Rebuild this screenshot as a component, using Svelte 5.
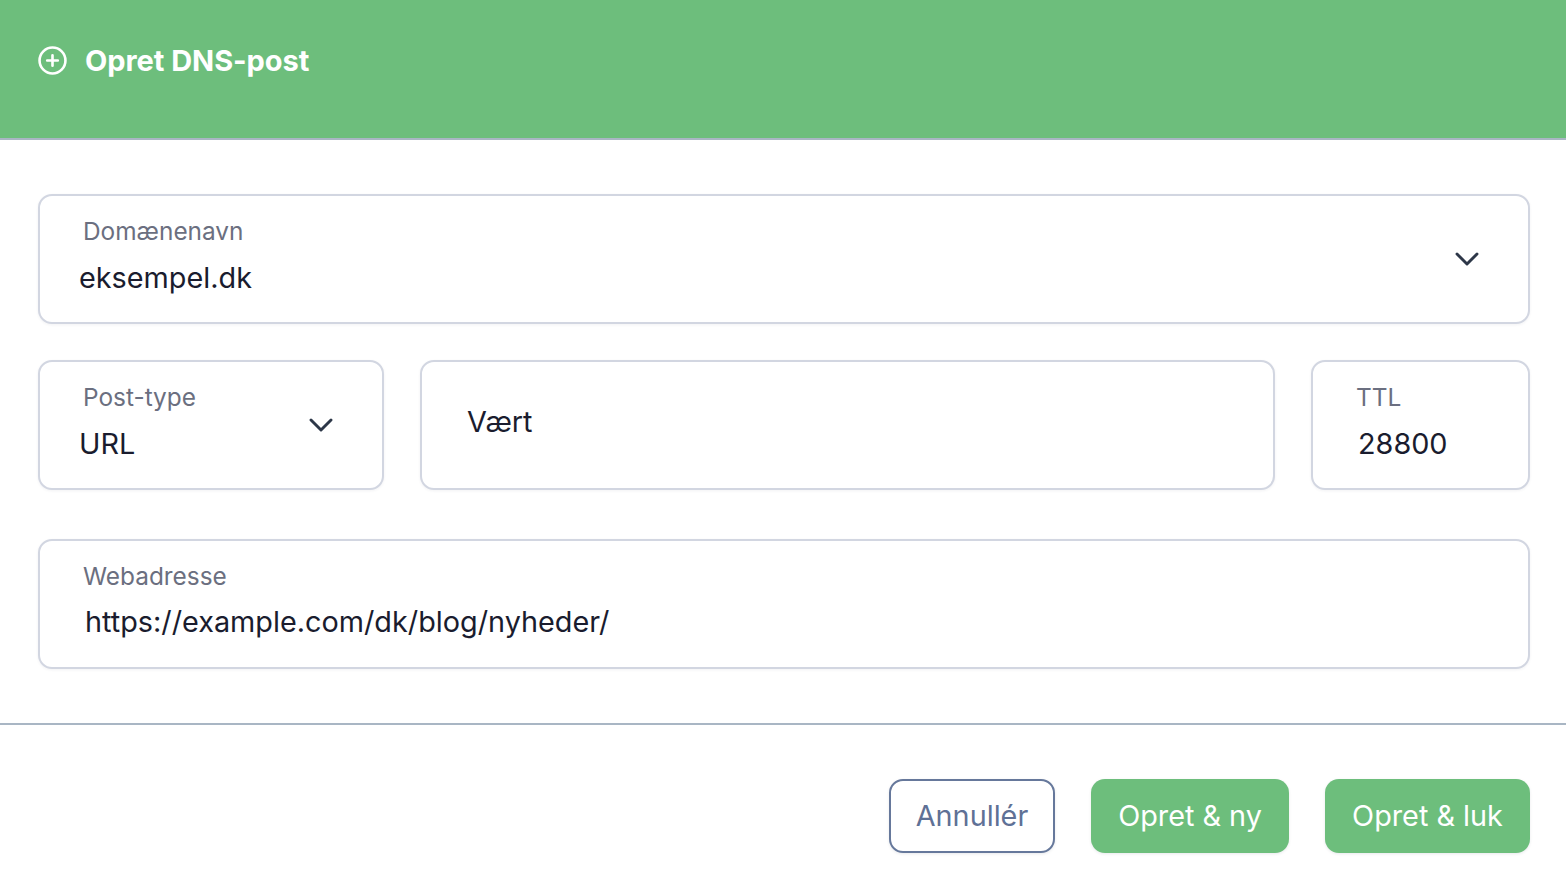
<script lang="ts">
  const title = 'Opret DNS-post';
</script>

<div class="dialog">
  <header class="head">
    <svg class="head-icon" viewBox="0 0 30 30" fill="none" stroke="#fff" stroke-width="2.7" stroke-linecap="round" aria-hidden="true">
      <circle cx="15" cy="15" r="13.4" />
      <path d="M15 9.5v11M9.5 15h11" />
    </svg>
    <h1>{title}</h1>
  </header>

  <main class="form">
    <div class="field select">
      <div class="stack">
        <span class="label">Domænenavn</span>
        <span class="value">eksempel.dk</span>
      </div>
      <svg class="chev" viewBox="0 0 24 14" fill="none" stroke="#2d3748" stroke-width="2.9" stroke-linecap="round" stroke-linejoin="round" aria-hidden="true">
        <path d="M2 2l10 10L22 2" />
      </svg>
    </div>

    <div class="row">
      <div class="field select type">
        <div class="stack">
          <span class="label">Post-type</span>
          <span class="value">URL</span>
        </div>
        <svg class="chev" viewBox="0 0 24 14" fill="none" stroke="#2d3748" stroke-width="2.9" stroke-linecap="round" stroke-linejoin="round" aria-hidden="true">
          <path d="M2 2l10 10L22 2" />
        </svg>
      </div>
      <div class="field host">
        <span class="value">Vært</span>
      </div>
      <div class="field ttl">
        <span class="label">TTL</span>
        <span class="value">28800</span>
      </div>
    </div>

    <div class="field url">
      <span class="label">Webadresse</span>
      <span class="value">https://example.com/dk/blog/nyheder/</span>
    </div>
  </main>

  <footer class="foot">
    <button class="btn ghost" type="button">Annullér</button>
    <button class="btn primary new" type="button">Opret &amp; ny</button>
    <button class="btn primary close" type="button">Opret &amp; luk</button>
  </footer>
</div>

<style>
  :global(body) { margin: 0; background: #fff; font-family: Inter, 'Liberation Sans', sans-serif; }

  .dialog { width: 1566px; height: 889px; overflow: hidden; background: #fff; }

  .head {
    height: 138px;
    box-sizing: content-box;
    background: #6dbe7c;
    border-bottom: 2px solid #a9b6c4;
    display: flex; align-items: flex-start; gap: 18px;
    padding: 0 38px;
  }
  .head-icon { width: 29px; height: 29px; margin-top: 46px; flex-shrink: 0; }
  .head h1 {
    margin: 43px 0 0;
    font-size: 29px; line-height: 36px; font-weight: 700;
    color: #fff; letter-spacing: -0.05px;
  }

  .form {
    padding: 54px 36px 54px 38px;
    display: flex; flex-direction: column; gap: 36px;
  }
  .row { display: flex; gap: 36px; margin-bottom: 13px; }

  .field {
    box-sizing: border-box;
    height: 130px;
    border: 2px solid #d2d6e1;
    border-radius: 14px;
    background: #fff;
    box-shadow: 0 1px 3px rgba(30, 40, 70, 0.06);
    display: flex; flex-direction: column;
    padding: 19px 0 0 43px;
  }
  .select { flex-direction: row; align-items: flex-start; justify-content: space-between; }
  .stack { display: flex; flex-direction: column; }
  .label { font-size: 24.4px; line-height: 33px; color: #6b6f80; }
  .value { font-size: 28.8px; line-height: 36px; color: #1a1c2e; margin-top: 12px; }
  .select .value { margin-left: -4px; }

  .chev { width: 24px; height: 14px; margin-top: 37px; margin-right: 49px; flex-shrink: 0; }

  .type { width: 346px; }
  .host { flex: 1; padding: 0 0 0 45px; justify-content: center; }
  .host .value { margin: -6px 0 0; }
  .ttl { width: 219px; }
  .ttl .value { margin-left: 2px; }
  .url .value { margin-left: 2px; margin-top: 11px; }

  .foot {
    border-top: 2px solid #a9b6c4;
    padding: 54px 36px 0 0;
    display: flex; justify-content: flex-end; gap: 36px;
  }
  .btn {
    box-sizing: border-box;
    height: 74px;
    border-radius: 14px;
    font-family: inherit; font-size: 28.8px; line-height: 36px; font-weight: 400;
    box-shadow: 0 1px 3px rgba(30, 40, 70, 0.1);
    cursor: pointer;
    padding: 0;
  }
  .ghost { width: 166px; background: #fff; border: 2px solid #66789b; color: #5f7196; }
  .primary { background: #6dbe7c; border: none; color: #fff; }
  .new { width: 198px; }
  .close { width: 205px; }
</style>
